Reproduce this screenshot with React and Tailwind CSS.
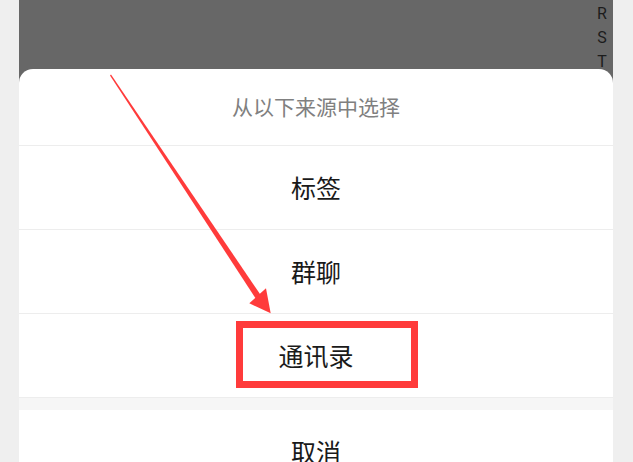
export default function App() {
  const items = ["标签", "群聊", "通讯录"];

  return (
    <div
      className="relative w-screen h-screen overflow-hidden bg-[#efefef] flex"
      style={{ fontFamily: '"Noto Sans CJK SC", "Noto Sans", sans-serif' }}
    >
      <div className="ml-[19px] w-[594px] h-full bg-[#676767] flex flex-col">
        {/* 背景页面（被遮罩） */}
        <div className="h-[69px] shrink-0 flex justify-end">
          <div
            className="mr-[5px] w-[12px] pt-[2px] flex flex-col items-center text-[16px] leading-[24px] text-[#1c1c1c]"
            style={{ fontFamily: 'Roboto, "Liberation Sans", Arial, sans-serif' }}
          >
            <span>R</span>
            <span>S</span>
            <span>T</span>
          </div>
        </div>

        {/* 底部弹出选择 */}
        <div className="flex-1 bg-white rounded-t-[14px] flex flex-col">
          <div className="h-[77px] shrink-0 flex items-center justify-center border-b border-[#ededed] text-[21px] text-[#808080]">
            从以下来源中选择
          </div>
          {items.map((t) => (
            <div
              key={t}
              className="h-[84px] shrink-0 flex items-center justify-center border-b border-[#ededed] text-[25px] text-[#1a1a1a]"
            >
              {t}
            </div>
          ))}
          <div className="h-[12px] shrink-0 bg-[#f6f6f6]" />
          <div className="h-[84px] shrink-0 flex items-center justify-center text-[25px] text-[#1a1a1a]">
            取消
          </div>
        </div>
      </div>

      {/* 标注：红框 */}
      <div className="absolute left-[236px] top-[321px] w-[182px] h-[67px] border-[7px] border-[#ff3b3b]" />

      {/* 标注：箭头 */}
      <svg
        className="absolute left-0 top-0 pointer-events-none"
        width="633"
        height="462"
        viewBox="0 0 633 462"
      >
        <polygon
          points="110,75.4 111,74.6 261.5,296.3 256.5,299.7"
          fill="#ff3b3b"
        />
        <polygon points="249.3,303.3 266,288.3 270.7,313.3" fill="#ff3b3b" />
      </svg>
    </div>
  );
}
